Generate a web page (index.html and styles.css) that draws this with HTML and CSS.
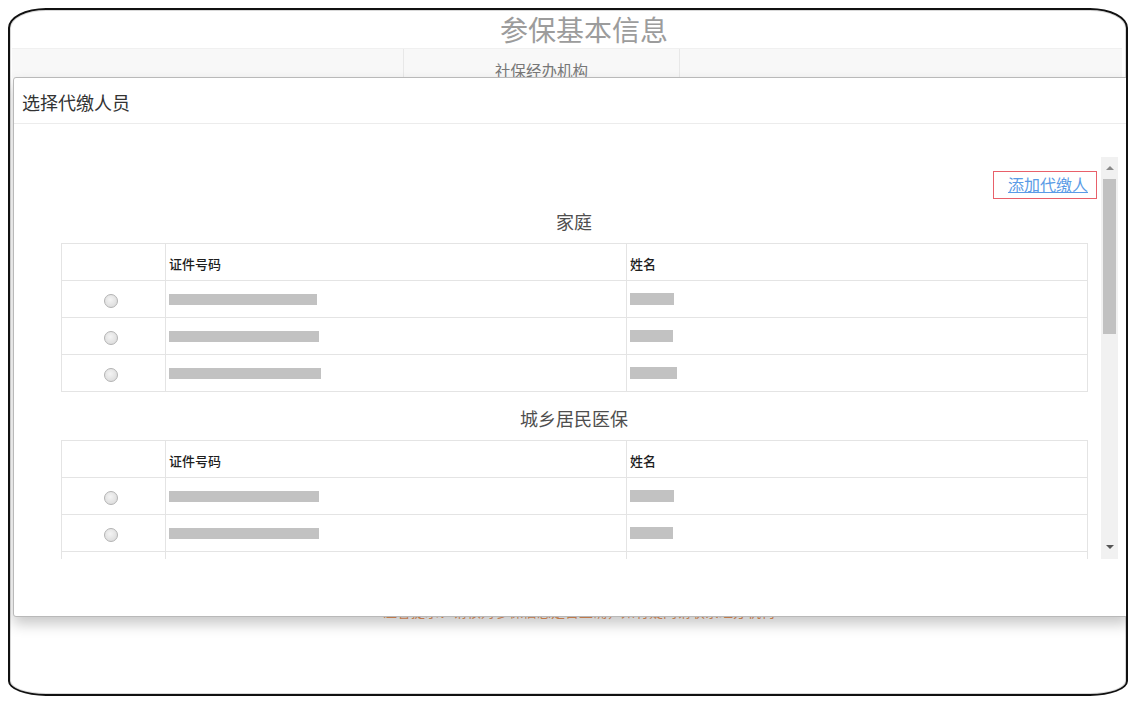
FILE: index.html
```html
<!DOCTYPE html>
<html lang="zh-CN">
<head>
<meta charset="utf-8">
<title>参保基本信息</title>
<link rel="stylesheet" href="styles.css">
</head>
<body>
<div class="frame">
  <div class="page-title">参保基本信息</div>
  <div class="tabs">
    <div class="tab"></div>
    <div class="tab tab-active">社保经办机构</div>
    <div class="tab tab-last"></div>
  </div>
  <div class="notice">温馨提示：请核对参保信息是否正确，如有疑问请联系经办机构</div>

  <div class="modal">
    <div class="modal-header">选择代缴人员</div>
    <div class="modal-body">
      <div class="scroll">
        <div class="scroll-content">
          <div class="link-row"><a class="add-link" href="#">添加代缴人</a></div>

          <div class="group-title">家庭</div>
          <table class="grid">
            <colgroup><col class="c1"><col class="c2"><col class="c3"></colgroup>
            <tr class="head"><td></td><td>证件号码</td><td>姓名</td></tr>
            <tr><td><span class="radio"></span></td><td><span class="bar" style="width:148px"></span></td><td><span class="bar bar-name" style="width:44px"></span></td></tr>
            <tr><td><span class="radio"></span></td><td><span class="bar" style="width:150px"></span></td><td><span class="bar bar-name" style="width:43px"></span></td></tr>
            <tr><td><span class="radio"></span></td><td><span class="bar" style="width:152px"></span></td><td><span class="bar bar-name" style="width:47px"></span></td></tr>
          </table>

          <div class="group-title">城乡居民医保</div>
          <table class="grid">
            <colgroup><col class="c1"><col class="c2"><col class="c3"></colgroup>
            <tr class="head"><td></td><td>证件号码</td><td>姓名</td></tr>
            <tr><td><span class="radio"></span></td><td><span class="bar" style="width:150px"></span></td><td><span class="bar bar-name" style="width:44px"></span></td></tr>
            <tr><td><span class="radio"></span></td><td><span class="bar" style="width:150px"></span></td><td><span class="bar bar-name" style="width:43px"></span></td></tr>
            <tr><td></td><td></td><td></td></tr>
          </table>
        </div>
        <div class="scrollbar">
          <span class="arrow arrow-up"></span>
          <span class="thumb"></span>
          <span class="arrow arrow-down"></span>
        </div>
      </div>
    </div>
  </div>
</div>
</body>
</html>
```

FILE: styles.css
```css
* { box-sizing: border-box; }

html, body {
  margin: 0;
  padding: 0;
  background: #ffffff;
}

body {
  font-family: "Noto Sans CJK SC", "Noto Sans", "Liberation Sans", sans-serif;
  color: #333;
}

.frame {
  position: relative;
  margin: 8px 0 0 8px;
  width: 1120px;
  height: 688px;
  border: 2px solid #111;
  border-radius: 38px 38px 38px 38px / 20px 20px 15px 15px;
  overflow: hidden;
  background: #fff;
  box-shadow: inset 0 0 0 1px #d8d8d8;
}

.page-title {
  height: 38px;
  line-height: 38px;
  text-align: center;
  font-size: 28px;
  color: #9c9c9c;
  padding-left: 32px;
}

.tabs {
  display: grid;
  grid-template-columns: 392px 276px 1fr;
  height: 30px;
  background: #f8f8f8;
  border-top: 1px solid #f0f0f0;
  margin: 0 4px 0 2px;
}

.tab {
  border-right: 1px solid #e8e8e8;
}

.tab-last { border-right: none; }

.tab-active {
  padding-top: 10px;
  font-size: 15.5px;
  line-height: 22px;
  text-align: center;
  color: #777;
}

.notice {
  margin-top: 523px;
  text-align: center;
  font-size: 14px;
  line-height: 20px;
  color: #e8945c;
  padding-left: 22px;
}

.modal {
  position: absolute;
  top: 67px;
  left: 3px;
  width: 1116px;
  height: 540px;
  background: #fff;
  border: 1px solid #b9b9b9;
  border-radius: 3px;
  box-shadow: 0 7px 14px rgba(0, 0, 0, 0.22);
  display: flex;
  flex-direction: column;
}

.modal-header {
  height: 46px;
  padding: 2px 0 0 8px;
  font-size: 18px;
  line-height: 44px;
  color: #333;
  border-bottom: 1px solid #ececec;
}

.modal-body {
  padding-top: 33px;
}

.scroll {
  display: flex;
  height: 402px;
  margin: 0 10px 0 47px;
}

.scroll-content {
  flex: 1;
  overflow: hidden;
  padding-top: 14px;
}

.link-row {
  display: flex;
  justify-content: flex-end;
  padding-right: 4px;
}

.add-link {
  display: block;
  height: 28px;
  width: 104px;
  border: 1.5px solid #e8606a;
  font-size: 16px;
  line-height: 25px;
  text-align: right;
  padding-right: 8px;
  color: #5a9be6;
  text-decoration: underline;
}

.group-title {
  height: 44px;
  line-height: 44px;
  text-align: center;
  font-size: 18px;
  color: #4e4e4e;
  padding-right: 14px;
}

.grid {
  width: 1026px;
  border-collapse: collapse;
  margin-bottom: 4px;
  table-layout: fixed;
}

.grid .c1 { width: 104px; }
.grid .c2 { width: 461px; }
.grid .c3 { width: 461px; }

.grid td {
  height: 37px;
  border: 1.5px solid #e4e4e4;
  padding: 0 0 0 3px;
  vertical-align: middle;
  font-size: 13px;
  color: #1e1e1e;
}

.grid tr.head td {
  padding-top: 3px;
  font-weight: 500;
}

.grid td:first-child {
  text-align: center;
  padding: 0 6px 0 0;
}

.radio {
  display: inline-block;
  width: 14px;
  height: 14px;
  border-radius: 50%;
  border: 1px solid #b4b4b4;
  background: radial-gradient(circle at 45% 40%, #f4f4f4 0%, #dcdcdc 80%);
  vertical-align: middle;
}

.bar {
  display: block;
  height: 11px;
  background: #c2c2c2;
}

.bar-name {
  height: 12px;
}

.scrollbar {
  position: relative;
  width: 17px;
  background: #f1f1f1;
  display: flex;
  flex-direction: column;
  align-items: center;
}

.arrow {
  display: block;
  width: 0;
  height: 0;
  border-left: 4px solid transparent;
  border-right: 4px solid transparent;
}

.arrow-up {
  margin-top: 9px;
  border-bottom: 4px solid #8a8a8a;
}

.arrow-down {
  margin-top: auto;
  margin-bottom: 10px;
  border-top: 4px solid #555;
}

.thumb {
  display: block;
  width: 13px;
  height: 155px;
  margin-top: 9px;
  background: #c1c1c1;
}
```
